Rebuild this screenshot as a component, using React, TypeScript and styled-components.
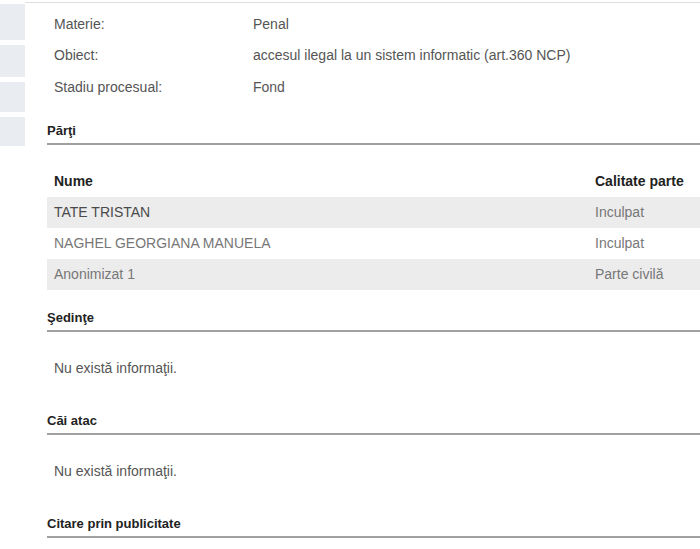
import { Fragment } from "react";
import styled, { createGlobalStyle } from "styled-components";

const GlobalStyle = createGlobalStyle`
  body {
    margin: 0;
    background: #fff;
    font-family: "Liberation Sans", Arial, sans-serif;
  }
`;

const Page = styled.div`
  display: flex;
  width: 700px;
  height: 549px;
  overflow: hidden;
`;

const Sidebar = styled.div`
  width: 25px;
  padding-top: 4px;
  display: flex;
  flex-direction: column;
  gap: 5px;
`;

const SideBlock = styled.div<{ $h: number }>`
  height: ${(p) => p.$h}px;
  background: #e9ecf0;
`;

const Main = styled.div`
  flex: 1;
  border-top: 1px solid #dedede;
  margin-top: 2px;
  padding-left: 22px;
`;

const Details = styled.div`
  display: grid;
  grid-template-columns: 199px 1fr;
  grid-auto-rows: 31.5px;
  align-items: center;
  padding: 5px 0 0 7px;
  color: #555;
  font-size: 14px;
`;

const SectionTitle = styled.h3<{ $top: number }>`
  margin: ${(p) => p.$top}px 0 0;
  padding: 0 0 4px;
  font-size: 13px;
  font-weight: bold;
  color: #222;
  border-bottom: 2px solid #a0a0a0;
  line-height: 16px;
`;

const Table = styled.div`
  margin-top: 21px;
`;

const TableRow = styled.div<{ $alt?: boolean }>`
  display: grid;
  grid-template-columns: 541px 1fr;
  height: 31px;
  align-items: center;
  padding-left: 7px;
  background: ${(p) => (p.$alt ? "#ececec" : "transparent")};
`;

const HeadCell = styled.div`
  font-size: 14px;
  font-weight: bold;
  color: #222;
  white-space: nowrap;
`;

const Cell = styled.div<{ $dark?: boolean }>`
  font-size: 14px;
  color: ${(p) => (p.$dark ? "#4a4a4a" : "#777")};
  white-space: nowrap;
`;

const Empty = styled.p`
  margin: 0;
  padding: 28px 0 0 7px;
  height: 62px;
  box-sizing: border-box;
  font-size: 14px;
  color: #555;
`;

const details = [
  ["Materie:", "Penal"],
  ["Obiect:", "accesul ilegal la un sistem informatic (art.360 NCP)"],
  ["Stadiu procesual:", "Fond"],
];

const parti = [
  { nume: "TATE TRISTAN", calitate: "Inculpat", dark: true },
  { nume: "NAGHEL GEORGIANA MANUELA", calitate: "Inculpat" },
  { nume: "Anonimizat 1", calitate: "Parte civilă" },
];

export default function App() {
  return (
    <>
      <GlobalStyle />
      <Page>
        <Sidebar>
          <SideBlock $h={36} />
          <SideBlock $h={32} />
          <SideBlock $h={30} />
          <SideBlock $h={29} />
        </Sidebar>
        <Main>
          <Details>
            {details.map(([k, v]) => (
              <Fragment key={k}>
                <span>{k}</span>
                <span>{v}</span>
              </Fragment>
            ))}
          </Details>
          <SectionTitle $top={20}>Părţi</SectionTitle>
          <Table>
            <TableRow>
              <HeadCell>Nume</HeadCell>
              <HeadCell>Calitate parte</HeadCell>
            </TableRow>
            {parti.map((p, i) => (
              <TableRow key={p.nume} $alt={i % 2 === 0}>
                <Cell $dark={p.dark}>{p.nume}</Cell>
                <Cell>{p.calitate}</Cell>
              </TableRow>
            ))}
          </Table>
          <SectionTitle $top={20}>Şedinţe</SectionTitle>
          <Empty>Nu există informaţii.</Empty>
          <SectionTitle $top={19}>Căi atac</SectionTitle>
          <Empty>Nu există informaţii.</Empty>
          <SectionTitle $top={19}>Citare prin publicitate</SectionTitle>
        </Main>
      </Page>
    </>
  );
}
